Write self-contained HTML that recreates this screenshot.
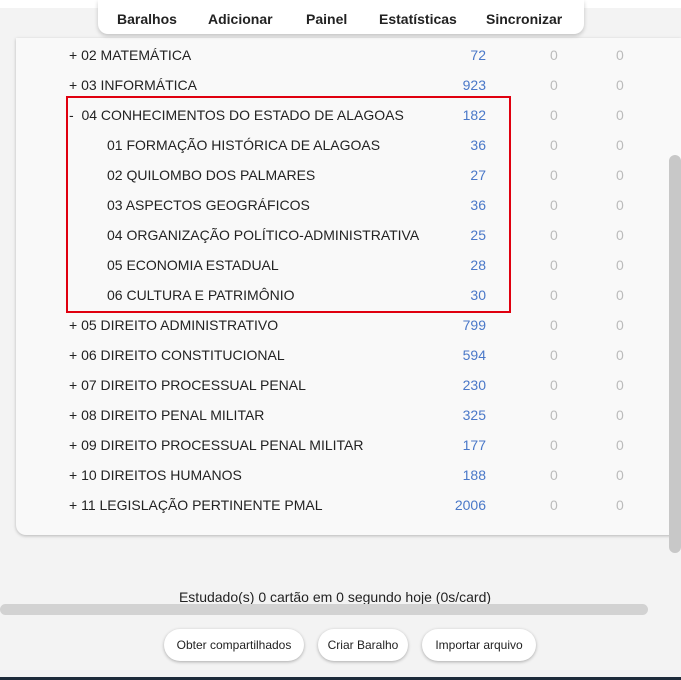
<!DOCTYPE html><html><head><style>
body{margin:0;width:681px;height:680px;overflow:hidden;background:#f3f3f3;font-family:"Liberation Sans",sans-serif;position:relative;color:#222}
.top{position:absolute;left:0;top:0;width:681px;height:8px;background:#fff}
.card{position:absolute;left:16px;top:38px;width:665px;height:497px;background:#f9f9f9;border-radius:0 0 10px 10px;box-shadow:0 1px 3px rgba(0,0,0,.25)}
.nav{position:absolute;left:98px;top:0;width:486px;height:34px;background:#fff;border-radius:0 0 10px 10px;box-shadow:0 2px 4px rgba(0,0,0,.2);font-weight:bold;font-size:14px}
.nav span{position:absolute;top:11px}
.row{position:absolute;left:0;width:681px;height:30px;font-size:14px;letter-spacing:0}
.row .n{position:absolute;top:7px}
.row .c{position:absolute;right:195px;top:7px;color:#4a78c8}
.row .z1{position:absolute;left:550px;top:7px;color:#bbb}
.row .z2{position:absolute;left:616px;top:7px;color:#bbb}
.red{position:absolute;left:66px;top:96px;width:441px;height:213px;border:2px solid #e0000f}
.sb{position:absolute;left:669px;top:155px;width:12px;height:398px;background:#c8c8c8;border-radius:6px}
.hb{position:absolute;left:0;top:604px;width:648px;height:11px;background:#d2d2d2;border-radius:6px}
.st{position:absolute;left:0;width:670px;text-align:center;top:589px;font-size:14px}
.btn{position:absolute;top:629px;height:32px;background:#fff;border-radius:16px;box-shadow:0 1px 3px rgba(0,0,0,.3);font-size:12px;line-height:32px;text-align:center}
.bot{position:absolute;left:0;top:677px;width:681px;height:3px;background:#1d2b3a}
</style></head><body>
<div class="top"></div>
<div class="card"></div>
<div class="nav"><span style="left:19px">Baralhos</span><span style="left:110px">Adicionar</span><span style="left:208px">Painel</span><span style="left:281px">Estatísticas</span><span style="left:388px">Sincronizar</span></div>
<div class="row" style="top:40px"><span class="n" style="left:69px">+ 02 MATEMÁTICA</span><span class="c">72</span><span class="z1">0</span><span class="z2">0</span></div>
<div class="row" style="top:70px"><span class="n" style="left:69px">+ 03 INFORMÁTICA</span><span class="c">923</span><span class="z1">0</span><span class="z2">0</span></div>
<div class="row" style="top:100px"><span class="n" style="left:69px">-&nbsp; 04 CONHECIMENTOS DO ESTADO DE ALAGOAS</span><span class="c">182</span><span class="z1">0</span><span class="z2">0</span></div>
<div class="row" style="top:130px"><span class="n" style="left:107px">01 FORMAÇÃO HISTÓRICA DE ALAGOAS</span><span class="c">36</span><span class="z1">0</span><span class="z2">0</span></div>
<div class="row" style="top:160px"><span class="n" style="left:107px">02 QUILOMBO DOS PALMARES</span><span class="c">27</span><span class="z1">0</span><span class="z2">0</span></div>
<div class="row" style="top:190px"><span class="n" style="left:107px">03 ASPECTOS GEOGRÁFICOS</span><span class="c">36</span><span class="z1">0</span><span class="z2">0</span></div>
<div class="row" style="top:220px"><span class="n" style="left:107px">04 ORGANIZAÇÃO POLÍTICO-ADMINISTRATIVA</span><span class="c">25</span><span class="z1">0</span><span class="z2">0</span></div>
<div class="row" style="top:250px"><span class="n" style="left:107px">05 ECONOMIA ESTADUAL</span><span class="c">28</span><span class="z1">0</span><span class="z2">0</span></div>
<div class="row" style="top:280px"><span class="n" style="left:107px">06 CULTURA E PATRIMÔNIO</span><span class="c">30</span><span class="z1">0</span><span class="z2">0</span></div>
<div class="row" style="top:310px"><span class="n" style="left:69px">+ 05 DIREITO ADMINISTRATIVO</span><span class="c">799</span><span class="z1">0</span><span class="z2">0</span></div>
<div class="row" style="top:340px"><span class="n" style="left:69px">+ 06 DIREITO CONSTITUCIONAL</span><span class="c">594</span><span class="z1">0</span><span class="z2">0</span></div>
<div class="row" style="top:370px"><span class="n" style="left:69px">+ 07 DIREITO PROCESSUAL PENAL</span><span class="c">230</span><span class="z1">0</span><span class="z2">0</span></div>
<div class="row" style="top:400px"><span class="n" style="left:69px">+ 08 DIREITO PENAL MILITAR</span><span class="c">325</span><span class="z1">0</span><span class="z2">0</span></div>
<div class="row" style="top:430px"><span class="n" style="left:69px">+ 09 DIREITO PROCESSUAL PENAL MILITAR</span><span class="c">177</span><span class="z1">0</span><span class="z2">0</span></div>
<div class="row" style="top:460px"><span class="n" style="left:69px">+ 10 DIREITOS HUMANOS</span><span class="c">188</span><span class="z1">0</span><span class="z2">0</span></div>
<div class="row" style="top:490px"><span class="n" style="left:69px">+ 11 LEGISLAÇÃO PERTINENTE PMAL</span><span class="c">2006</span><span class="z1">0</span><span class="z2">0</span></div>
<div class="red"></div>
<div class="sb"></div>
<div class="st">Estudado(s) 0 cartão em 0 segundo hoje (0s/card)</div>
<div class="hb"></div>
<div class="btn" style="left:164px;width:140px">Obter compartilhados</div>
<div class="btn" style="left:318px;width:90px">Criar Baralho</div>
<div class="btn" style="left:422px;width:114px">Importar arquivo</div>
<div class="bot"></div>
</body></html>
